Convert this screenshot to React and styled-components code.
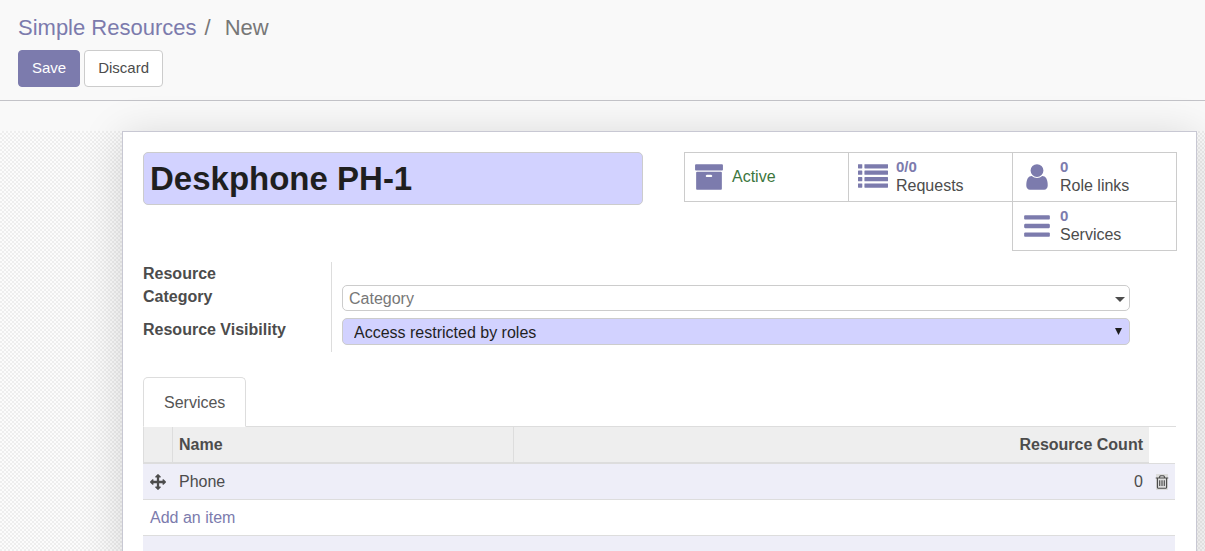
import React, { useState } from "react";
import styled, { createGlobalStyle } from "styled-components";

const GlobalStyle = createGlobalStyle`
  * {
    box-sizing: border-box;
  }
  html, body, #root {
    height: 100%;
  }
  body {
    margin: 0;
    overflow: hidden;
    background-color: #f9f9f9;
    color: #4c4c4c;
    font-family: "Liberation Sans", Arial, sans-serif;
    font-size: 16px;
    line-height: 23px;
  }
  button, input, select {
    font: inherit;
    color: inherit;
  }
`;

const Page = styled.div`
  display: flex;
  flex-direction: column;
  min-height: 100%;
`;

const ControlPanel = styled.header`
  display: flex;
  flex-direction: column;
  gap: 6px;
  padding: 12px 18px 13px;
  border-bottom: 1px solid #c3c3c8;
`;

const Breadcrumb = styled.nav`
  display: flex;
  gap: 8px;
  font-size: 22px;
  line-height: 32px;
  color: #777777;
`;

const BreadcrumbLink = styled.a`
  color: #7c7bad;
  text-decoration: none;
`;

const Current = styled.span`
  margin-left: 6px;
`;

const Actions = styled.div`
  display: flex;
  gap: 4px;
`;

const Button = styled.button`
  height: 37px;
  padding: 0 13px 2px;
  border: 1px solid ${(props) => (props.$primary ? "#7c7bad" : "#cccccc")};
  border-radius: 4px;
  background-color: ${(props) => (props.$primary ? "#7c7bad" : "white")};
  color: ${(props) => (props.$primary ? "white" : "#4c4c4c")};
  font-size: 15px;
  cursor: pointer;
`;

const SheetArea = styled.main`
  flex: 1;
  display: flex;
  margin-top: 30px;
  padding: 0 8px 0 122px;
  background-color: #fcfcfc;
  background-image: conic-gradient(#eeeeee 25%, transparent 0 50%, #eeeeee 0 75%, transparent 0);
  background-size: 4px 4px;
`;

const Sheet = styled.form`
  flex: 1;
  min-width: 0;
  padding: 20px 19px 0 20px;
  border: 1px solid #c8c8d3;
  background-color: white;
  box-shadow: 0 5px 40px rgba(0, 0, 0, 0.15);
`;

const SheetTop = styled.div`
  display: flex;
  align-items: flex-start;
  justify-content: space-between;
  gap: 20px;
`;

const TitleInput = styled.input`
  flex: 0 1 500px;
  min-width: 0;
  height: 53px;
  padding: 0 6px;
  border: 1px solid #cccccc;
  border-radius: 5px;
  background-color: #d2d2ff;
  color: #1f1f1f;
  font-size: 33px;
  font-weight: bold;
`;

const ButtonBox = styled.div`
  display: flex;
  flex-wrap: wrap;
  justify-content: flex-end;
  width: 493px;
  padding: 0 0 1px 1px;
`;

const StatButton = styled.button`
  display: flex;
  align-items: center;
  gap: 8px;
  width: 165px;
  height: 50px;
  margin: 0 0 -1px -1px;
  padding: 0 9px;
  border: 1px solid #cccccc;
  background-color: white;
  text-align: left;
  line-height: 18px;
  cursor: pointer;
`;

const StatText = styled.span`
  display: flex;
  flex-direction: column;
  color: ${(props) => (props.$active ? "#3c763d" : "#4c4c4c")};
`;

const StatValue = styled.span`
  color: #7c7bad;
  font-size: 15px;
  line-height: 16px;
  padding-bottom: 2px;
  font-weight: bold;
`;

const Icon = styled.svg`
  flex: none;
  display: block;
  width: ${(props) => props.$size}px;
  height: ${(props) => props.$size}px;
  fill: ${(props) => props.$color || "#7c7bad"};
`;

const Group = styled.div`
  display: grid;
  grid-template-columns: 188px 1fr;
  margin: 11px 47px 0 0;
`;

const LabelCell = styled.div`
  padding-bottom: ${(props) => (props.$last ? "11px" : "10px")};
  font-weight: bold;

  label {
    display: block;
    max-width: 150px;
  }
`;

const NarrowLabel = styled.label`
  padding-right: 60px;
`;

const FieldCell = styled.div`
  display: flex;
  align-items: flex-end;
  padding: 0 0 7px 10px;
  border-left: 1px solid #dddddd;
`;

const Combo = styled.div`
  flex: 1;
  display: flex;
  align-items: center;
  height: 26px;
  padding-right: 4px;
  border: 1px solid #cccccc;
  border-radius: 5px;
  background-color: white;
`;

const ComboInput = styled.input`
  flex: 1;
  min-width: 0;
  height: 24px;
  padding: 1px 6px 0;
  border: 0;
  outline: 0;
  background: none;

  &::placeholder {
    color: #777777;
    opacity: 1;
  }
`;

const Caret = styled.span`
  margin-top: 3px;
  border-top: 5px solid #4c4c4c;
  border-left: 5px solid transparent;
  border-right: 5px solid transparent;
`;

const Select = styled.select`
  flex: 1;
  min-width: 0;
  height: 27px;
  padding: 2px 11px 0;
  border: 1px solid #cccccc;
  border-radius: 5px;
  appearance: none;
  color: #1f1f1f;
  background: #d2d2ff
    url("data:image/svg+xml,%3Csvg xmlns='http://www.w3.org/2000/svg' width='7' height='7'%3E%3Cpath d='M0 0h7L3.5 7z' fill='%231f1f1f'/%3E%3C/svg%3E")
    no-repeat right 7px top 9px;
`;

const Notebook = styled.section`
  margin: 25px 1px 0 0;
`;

const Tabs = styled.div`
  display: flex;
  border-bottom: 1px solid #dddddd;
`;

const Tab = styled.button`
  height: 50px;
  margin-bottom: -1px;
  padding: 0 20px;
  border: 1px solid #dddddd;
  border-bottom-color: white;
  border-radius: 5px 5px 0 0;
  background-color: white;
  color: #555555;
`;

const Table = styled.table`
  width: calc(100% - 1px);
  border-collapse: separate;
  border-spacing: 0;
  table-layout: fixed;

  th {
    height: 37px;
    padding: 0 6px;
    border-left: 1px solid #dddddd;
    border-bottom: 2px solid #dddddd;
    background-color: #eeeeee;
    text-align: left;
  }
  th:last-child {
    border-left: 0;
    border-bottom: 1px solid #dddddd;
    background: none;
  }
  td {
    height: 36px;
    padding: 0 6px 0 7px;
    border-bottom: 1px solid #dddddd;
  }
  tbody tr:nth-child(odd) td {
    background-color: #eeeef8;
  }
  th.number, td.number {
    text-align: right;
  }
`;

const HandleCol = styled.col`
  width: 29px;
`;

const NameCol = styled.col`
  width: 33%;
`;

const DeleteCol = styled.col`
  width: 26px;
`;

const IconButton = styled.button`
  display: flex;
  justify-content: center;
  width: ${(props) => (props.$shaded ? "12px" : "16px")};
  padding: 0;
  border: 0;
  background-color: ${(props) => (props.$shaded ? "#dcdcdc" : "transparent")};
  cursor: pointer;
`;

const AddLink = styled.a`
  color: #7c7bad;
  text-decoration: none;
`;

const square = "q0 13-9.5 22.5t-22.5 9.5h-192q-13 0-22.5-9.5t-9.5-22.5v-192q0-13 9.5-22.5t22.5-9.5h192q13 0 22.5 9.5t9.5 22.5z";
const line = "q0 13-9.5 22.5t-22.5 9.5h-1344q-13 0-22.5-9.5t-9.5-22.5v-192q0-13 9.5-22.5t22.5-9.5h1344q13 0 22.5 9.5t9.5 22.5z";
const bar = "q0 26-19 45t-45 19h-1408q-26 0-45-19t-19-45v-128q0-26 19-45t45-19h1408q26 0 45 19t19 45z";
const slot = "q0 14-9 23t-23 9h-64q-14 0-23-9t-9-23v-576q0-14 9-23t23-9h64q14 0 23 9t9 23z";

const icons = {
  archive:
    "M1088 832q0-26-19-45t-45-19h-256q-26 0-45 19t-19 45 19 45 45 19h256q26 0 45-19t19-45zm576-192v960q0 26-19 45t-45 19h-1408q-26 0-45-19t-19-45v-960q0-26 19-45t45-19h1408q26 0 45 19t19 45zm64-448v256q0 26-19 45t-45 19h-1536q-26 0-45-19t-19-45v-256q0-26 19-45t45-19h1536q26 0 45 19t19 45z",
  list: [352, 736, 1120, 1504]
    .map((y) => `M256 ${y}${square}M1792 ${y}${line}`)
    .join(""),
  user:
    "M1536 1399q0 109-62.5 187t-150.5 78h-854q-88 0-150.5-78t-62.5-187q0-85 8.5-160.5t31.5-152 58.5-131 94-89 134.5-34.5q131 128 313 128t313-128q76 0 134.5 34.5t94 89 58.5 131 31.5 152 8.5 160.5zm-256-887q0 159-112.5 271.5t-271.5 112.5-271.5-112.5-112.5-271.5 112.5-271.5 271.5-112.5 271.5 112.5 112.5 271.5z",
  bars: [448, 960, 1472].map((y) => `M1664 ${y}${bar}`).join(""),
  arrows:
    "M1792 896q0 26-19 45l-256 256q-19 19-45 19t-45-19-19-45v-128h-384v384h128q26 0 45 19t19 45-19 45l-256 256q-19 19-45 19t-45-19l-256-256q-19-19-19-45t19-45 45-19h128v-384h-384v128q0 26-19 45t-45 19-45-19l-256-256q-19-19-19-45t19-45l256-256q19-19 45-19t45 19 19 45v128h384v-384h-128q-26 0-45-19t-19-45 19-45l256-256q19-19 45-19t45 19l256 256q19 19 19 45t-19 45-45 19h-128v384h384v-128q0-26 19-45t45-19 45 19l256 256q19 19 19 45z",
  trash:
    [704, 960, 1216].map((x) => `M${x} 1312${slot}`).join("") +
    "M1344 1460v-948h-896v948q0 22 7 40.5t14.5 27 10.5 8.5h832q3 0 10.5-8.5t14.5-27 7-40.5zm-672-1076h448l-48-117q-7-9-17-11h-317q-10 2-17 11zm928 32v64q0 14-9 23t-23 9h-96v948q0 83-47 143.5t-113 60.5h-832q-66 0-113-58.5t-47-141.5v-952h-96q-14 0-23-9t-9-23v-64q0-14 9-23t23-9h309l70-167q15-37 54-63t79-26h320q40 0 79 26t54 63l70 167h309q14 0 23 9t9 23z",
};

function Glyph({ name, size, color }) {
  return (
    <Icon viewBox="0 0 1792 1792" $size={size} $color={color} aria-hidden="true">
      <path d={icons[name]} />
    </Icon>
  );
}

const stats = [
  { icon: "archive", label: "Active", active: true },
  { icon: "list", label: "Requests", value: "0/0" },
  { icon: "user", label: "Role links", value: "0" },
  { icon: "bars", label: "Services", value: "0" },
];

function App() {
  const [name, setName] = useState("Deskphone PH-1");

  return (
    <Page>
      <GlobalStyle />
      <ControlPanel>
        <Breadcrumb>
          <BreadcrumbLink href="#">Simple Resources</BreadcrumbLink>
          <span>/</span>
          <Current>New</Current>
        </Breadcrumb>
        <Actions>
          <Button $primary>Save</Button>
          <Button>Discard</Button>
        </Actions>
      </ControlPanel>

      <SheetArea>
        <Sheet onSubmit={(e) => e.preventDefault()}>
          <SheetTop>
            <TitleInput
              aria-label="Name"
              value={name}
              onChange={(e) => setName(e.target.value)}
            />
            <ButtonBox>
              {stats.map((stat) => (
                <StatButton type="button" key={stat.label}>
                  <Glyph name={stat.icon} size={30} />
                  <StatText $active={stat.active}>
                    {stat.value && <StatValue>{stat.value}</StatValue>}
                    {stat.label}
                  </StatText>
                </StatButton>
              ))}
            </ButtonBox>
          </SheetTop>

          <Group>
            <LabelCell>
              <NarrowLabel htmlFor="category">Resource Category</NarrowLabel>
            </LabelCell>
            <FieldCell>
              <Combo>
                <ComboInput id="category" placeholder="Category" />
                <Caret />
              </Combo>
            </FieldCell>
            <LabelCell $last>
              <label htmlFor="visibility">Resource Visibility</label>
            </LabelCell>
            <FieldCell>
              <Select id="visibility">
                <option>Access restricted by roles</option>
              </Select>
            </FieldCell>
          </Group>

          <Notebook>
            <Tabs role="tablist">
              <Tab type="button" role="tab" aria-selected="true">
                Services
              </Tab>
            </Tabs>
            <Table>
              <colgroup>
                <HandleCol />
                <NameCol />
                <col />
                <DeleteCol />
              </colgroup>
              <thead>
                <tr>
                  <th></th>
                  <th>Name</th>
                  <th className="number">Resource Count</th>
                  <th></th>
                </tr>
              </thead>
              <tbody>
                <tr>
                  <td>
                    <IconButton type="button" aria-label="Move">
                      <Glyph name="arrows" size={16} color="#4c4c4c" />
                    </IconButton>
                  </td>
                  <td>Phone</td>
                  <td className="number">0</td>
                  <td>
                    <IconButton type="button" aria-label="Delete" $shaded>
                      <Glyph name="trash" size={16} color="#4c4c4c" />
                    </IconButton>
                  </td>
                </tr>
                <tr>
                  <td colSpan={4}>
                    <AddLink href="#">Add an item</AddLink>
                  </td>
                </tr>
                <tr>
                  <td colSpan={4}></td>
                </tr>
              </tbody>
            </Table>
          </Notebook>
        </Sheet>
      </SheetArea>
    </Page>
  );
}

export default App;
